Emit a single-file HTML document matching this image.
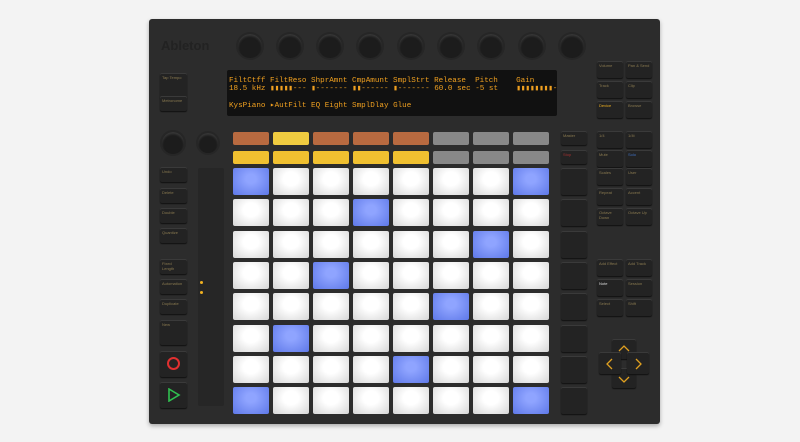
<!DOCTYPE html><html><head><style>
body{margin:0;width:800px;height:442px;background:#f3f3f3;position:relative;overflow:hidden;font-family:"Liberation Sans",sans-serif}
.a{position:absolute}
.body{left:149px;top:19px;width:511px;height:405px;background:#2c2c2c;border-radius:3px;box-shadow:0 2px 4px rgba(0,0,0,.3)}
.k{position:absolute;width:24px;height:24px;border-radius:50%;background:#1c1c1c;box-shadow:0 0 0 2px #262626,inset 0 2px 2px #383838}
.b{position:absolute;background:#232323;border-radius:2px;box-shadow:inset 0 1px 0 #3a3a3a,0 1px 1px #111;font-size:4px;color:#8a7a50;padding:2px;box-sizing:border-box;line-height:5px}
.p{position:absolute;width:36px;height:27px;border-radius:2px;background:radial-gradient(ellipse at 50% 40%,#fff 30%,#d6d6d6 100%)}
.bl{background:radial-gradient(ellipse at 50% 40%,#8fa4ff 20%,#5e78e8 100%)}
.disp{left:227px;top:70px;width:330px;height:46px;background:#111;border-radius:2px;font-family:"Liberation Mono",monospace;color:#f0a020;font-size:7.6px;line-height:8.3px;padding:7px 0 0 2px;box-sizing:border-box;white-space:pre;overflow:hidden}
</style></head><body>
<div class="a body"></div>
<div class="a" style="left:161px;top:38px;color:#222;font-size:13px;font-weight:bold">Ableton</div>
<div class="a disp">FiltCtff FiltReso ShprAmnt CmpAmunt SmplStrt Release  Pitch    Gain
18.5 kHz ▮▮▮▮▮--- ▮------- ▮▮------ ▮------- 60.0 sec -5 st    ▮▮▮▮▮▮▮▮-

KysPiano ▸AutFilt EQ Eight SmplDlay Glue</div>
<script>
let h='';
[250,290,330,370,411,451,491,532,572].forEach(x=>h+=`<div class="k" style="left:${x-12}px;top:34px"></div>`);
h+=`<div class="k" style="left:162px;top:132px;width:22px;height:22px"></div><div class="k" style="left:198px;top:133px;width:20px;height:20px"></div>`;
const tc=['#b86a40','#f0cc40','#b86a40','#b86a40','#b86a40','#888','#888','#888'];
const sc=['#f0c030','#f0c030','#f0c030','#f0c030','#f0c030','#888','#888','#888'];
const blue=[[0,7],[3],[6],[2],[5],[1],[4],[0,7]];
for(let c=0;c<8;c++){let x=233+c*40;
h+=`<div class="a" style="left:${x}px;top:132px;width:36px;height:13px;border-radius:2px;background:${tc[c]}"></div>`;
h+=`<div class="a" style="left:${x}px;top:151px;width:36px;height:13px;border-radius:2px;background:${sc[c]}"></div>`;
for(let r=0;r<8;r++){let y=168+r*31.3;h+=`<div class="p ${blue[r].includes(c)?'bl':''}" style="left:${x}px;top:${y}px"></div>`;}}
[[73,26,'Tap Tempo'],[96,15,'Metronome'],[167,15,'Undo'],[188,15,'Delete'],[208,15,'Double'],[228,15,'Quantize'],[259,15,'Fixed Length'],[279,15,'Automation'],[299,15,'Duplicate'],[320,25,'New']].forEach(([y,hh,t])=>h+=`<div class="b" style="left:160px;top:${y}px;width:27px;height:${hh}px">${t}</div>`);
h+=`<div class="b" style="left:160px;top:351px;width:27px;height:26px"><div class="a" style="left:7px;top:6px;width:13px;height:13px;border:2px solid #e03030;border-radius:50%;box-sizing:border-box"></div></div>`;
h+=`<div class="b" style="left:160px;top:382px;width:27px;height:26px"><svg class="a" style="left:7px;top:6px" width="14" height="14"><path d="M2 1L12 7L2 13Z" fill="none" stroke="#30c050" stroke-width="1.6"/></svg></div>`;
h+=`<div class="a" style="left:198px;top:168px;width:26px;height:238px;background:#262626;border-radius:2px"></div>`;
h+=`<div class="a" style="left:200px;top:281px;width:3px;height:3px;background:#f0b020;border-radius:50%"></div><div class="a" style="left:200px;top:291px;width:3px;height:3px;background:#f0b020;border-radius:50%"></div>`;
h+=`<div class="b" style="left:561px;top:131px;width:26px;height:14px">Master</div><div class="b" style="left:561px;top:150px;width:26px;height:14px;color:#a03030">Stop</div>`;
for(let r=0;r<8;r++)h+=`<div class="b" style="left:561px;top:${168+r*31.3}px;width:26px;height:27px"></div>`;
const R=[[61,'Volume','Pan & Send'],[81,'Track','Clip'],[101,'Device','Browse'],[131,'1/4','1/4t'],[150,'Mute','Solo'],[168,'Scales','User'],[188,'Repeat','Accent'],[208,'Octave Down','Octave Up'],[259,'Add Effect','Add Track'],[279,'Note','Session'],[299,'Select','Shift']];
R.forEach(([y,a,b])=>{h+=`<div class="b" style="left:597px;top:${y}px;width:26px;height:17px;${a=='Device'?'color:#f0b020':a=='Note'?'color:#ddd':''}">${a}</div><div class="b" style="left:626px;top:${y}px;width:26px;height:17px;${b=='Solo'?'color:#4070c0':''}">${b}</div>`});
h+=`<div class="b" style="left:612px;top:339px;width:24px;height:20px"></div><div class="b" style="left:612px;top:368px;width:24px;height:20px"></div><div class="b" style="left:599px;top:352px;width:22px;height:22px"></div><div class="b" style="left:627px;top:352px;width:22px;height:22px"></div>`;
h+=`<svg class="a" style="left:599px;top:339px" width="52" height="50" fill="none" stroke="#e0a020" stroke-width="1.3"><path d="M20 12L25 7L30 12M20 38L25 43L30 38M13 20L8 25L13 30M37 20L42 25L37 30"/></svg>`;
document.write(h);
</script>
</body></html>
